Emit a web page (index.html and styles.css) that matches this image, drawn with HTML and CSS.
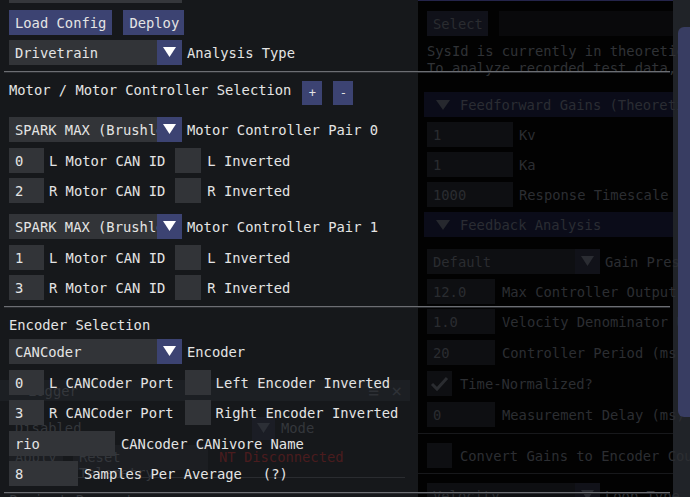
FILE: index.html
```html
<!DOCTYPE html>
<html>
<head>
<meta charset="utf-8">
<link rel="stylesheet" href="styles.css">
</head>
<body>
<div class="desk">
  <div class="under"></div>
  <main class="analyzer">
    <div class="a-row a-top">
      <div class="d-btn sel">Select</div>
      <div class="d-frame d-path"></div>
    </div>
    <div class="d-text">
      <div>SysId is currently in theoretical analysis mode.</div>
      <div>To analyze recorded test data, select a data file.</div>
    </div>
    <div class="d-header h1"><span class="d-tri"><svg width="14" height="12" viewBox="0 0 14 12"><polygon points="0,1 14,1 7,11" fill="#26282e"/></svg></span>Feedforward Gains (Theoretical)</div>
    <div class="a-row m5"><div class="d-frame w86">1</div><span class="d-lbl">Kv</span></div>
    <div class="a-row m5"><div class="d-frame w86">1</div><span class="d-lbl">Ka</span></div>
    <div class="a-row m5"><div class="d-frame w86">1000</div><span class="d-lbl">Response Timescale (ms)</span></div>
    <div class="d-header m5"><span class="d-tri"><svg width="14" height="12" viewBox="0 0 14 12"><polygon points="0,1 14,1 7,11" fill="#26282e"/></svg></span>Feedback Analysis</div>
    <div class="a-row m12"><div class="d-combo"><div class="d-val">Default</div><div class="d-arrow"><svg width="25" height="25" viewBox="0 0 25 25"><polygon points="6,7 19,7 12.5,17" fill="#2a2c32"/></svg></div></div><span class="d-lbl g5">Gain Preset</span></div>
    <div class="a-row m5"><div class="d-frame w68">12.0</div><span class="d-lbl g7">Max Controller Output (V)</span></div>
    <div class="a-row m5"><div class="d-frame w68">1.0</div><span class="d-lbl g7">Velocity Denominator Units</span></div>
    <div class="a-row m6"><div class="d-frame w68">20</div><span class="d-lbl g7">Controller Period (ms)</span></div>
    <div class="a-row m6"><div class="d-frame d-check"><svg width="25" height="25" viewBox="0 0 25 25"><polyline points="5,13 10,18 20,7" fill="none" stroke="#2a2c30" stroke-width="3"/></svg></div><span class="d-lbl g8">Time-Normalized?</span></div>
    <div class="a-row m6"><div class="d-frame w68">0</div><span class="d-lbl g7">Measurement Delay (ms)</span></div>
    <div class="d-sep s1"></div>
    <div class="a-row m9"><div class="d-frame d-check"></div><span class="d-lbl g8">Convert Gains to Encoder Counts</span></div>
    <div class="d-sep s2"></div>
    <div class="a-row m9"><div class="d-combo"><div class="d-val">Velocity</div><div class="d-arrow"><svg width="25" height="25" viewBox="0 0 25 25"><polygon points="6,7 19,7 12.5,17" fill="#2a2c32"/></svg></div></div><span class="d-lbl g5">Loop Type</span></div>
  </main>
  <div class="track"><div class="thumb"></div></div>
</div>

<section class="popup">
  <div class="ghost">
    <div class="g-title"><span class="g-tri"><svg width="12" height="11" viewBox="0 0 12 11"><polygon points="0,1 12,1 6,10" fill="#33363b"/></svg></span><span>Logger</span><span class="g-icons"><span class="g-menu">≡</span><span class="g-close">×</span></span></div>
    <div class="g-dis">Disabled</div>
    <div class="g-mode"><svg width="23" height="23" viewBox="0 0 23 23"><polygon points="5,6 18,6 11.5,16" fill="#2c2f36"/></svg></div>
    <div class="g-modelbl">Mode</div>
    <div class="g-apply">Apply</div>
    <div class="g-reset">Reset Telemetry</div>
    <div class="g-nt">NT Disconnected</div>
    <div class="g-line"></div>
    <div class="g-proj">Project Parameters</div>
  </div>

  <div class="content">
    <div class="topbar"></div>
    <div class="row m7">
      <div class="frame btn">Load Config</div>
      <div class="frame btn deploy">Deploy</div>
    </div>
    <div class="row m5">
      <div class="combo"><div class="val">Drivetrain</div><div class="arrow"><svg width="25" height="25" viewBox="0 0 25 25"><polygon points="6,7 19,7 12.5,17" fill="#ffffff"/></svg></div></div>
      <span class="lbl">Analysis Type</span>
    </div>
    <div class="sep"></div>
    <div class="row top m8">
      <span class="lbl title">Motor / Motor Controller Selection</span>
      <div class="frame btn small plus">+</div>
      <div class="frame btn small minus">-</div>
    </div>

    <div class="row m12">
      <div class="combo"><div class="val">SPARK MAX (Brushless)</div><div class="arrow"><svg width="25" height="25" viewBox="0 0 25 25"><polygon points="6,7 19,7 12.5,17" fill="#ffffff"/></svg></div></div>
      <span class="lbl">Motor Controller Pair 0</span>
    </div>
    <div class="row m6"><div class="frame id">0</div><span class="lbl">L Motor CAN ID</span><div class="frame check c1"></div><span class="lbl g6">L Inverted</span></div>
    <div class="row m5"><div class="frame id">2</div><span class="lbl">R Motor CAN ID</span><div class="frame check c1"></div><span class="lbl g6">R Inverted</span></div>

    <div class="row m11">
      <div class="combo"><div class="val">SPARK MAX (Brushless)</div><div class="arrow"><svg width="25" height="25" viewBox="0 0 25 25"><polygon points="6,7 19,7 12.5,17" fill="#ffffff"/></svg></div></div>
      <span class="lbl">Motor Controller Pair 1</span>
    </div>
    <div class="row m6"><div class="frame id">1</div><span class="lbl">L Motor CAN ID</span><div class="frame check c1"></div><span class="lbl g6">L Inverted</span></div>
    <div class="row m5"><div class="frame id">3</div><span class="lbl">R Motor CAN ID</span><div class="frame check c1"></div><span class="lbl g6">R Inverted</span></div>

    <div class="sep m6"></div>
    <div class="heading">Encoder Selection</div>
    <div class="row m5">
      <div class="combo"><div class="val">CANCoder</div><div class="arrow"><svg width="25" height="25" viewBox="0 0 25 25"><polygon points="6,7 19,7 12.5,17" fill="#ffffff"/></svg></div></div>
      <span class="lbl">Encoder</span>
    </div>
    <div class="row m6"><div class="frame id">0</div><span class="lbl">L CANCoder Port</span><div class="frame check c2"></div><span class="lbl">Left Encoder Inverted</span></div>
    <div class="row m5"><div class="frame id">3</div><span class="lbl">R CANCoder Port</span><div class="frame check c2"></div><span class="lbl">Right Encoder Inverted</span></div>
    <div class="row m6"><div class="frame bus">rio</div><span class="lbl g6">CANcoder CANivore Name</span></div>
    <div class="row m5"><div class="frame samples">8</div><span class="lbl g6">Samples Per Average</span><span class="lbl help">(?)</span></div>
    <div class="sep m6"></div>
  </div>
</section>
</body>
</html>
```
FILE: styles.css
```css
html, body {
  margin: 0;
  padding: 0;
  width: 690px;
  height: 497px;
  overflow: hidden;
  background: #000;
  font-family: "DejaVu Sans Mono", monospace;
  font-size: 13.8px;
}

/* ---------- background (dimmed) main window ---------- */
.desk {
  display: grid;
  grid-template-columns: 418px 255px 17px;
  width: 690px;
  height: 497px;
  overflow: hidden;
}
.under { background: #0a0b0c; }
.analyzer {
  position: relative;
  z-index: 1;
  background: #020202;
  border-top: 1px solid #24244a;
  padding-left: 9px;
  min-width: 0;
  color: #2f3135;
  white-space: nowrap;
}
.a-row { display: flex; align-items: center; }
.a-top { margin-top: 10px; }
.d-btn, .d-frame {
  height: 25px;
  box-sizing: border-box;
  display: flex;
  align-items: center;
  padding: 0 6px;
  background: #0e0f12;
  color: #2a2c30;
  flex: none;
}
.d-btn.sel { width: 61px; background: #101119; }
.d-path { flex: 1; margin-left: 11px; background: #09090b; }
.d-text { margin-top: 7px; line-height: 17px; color: #303236; }
.d-header {
  margin-left: -3px;
  height: 25px;
  background: #0b0c19;
  display: flex;
  align-items: center;
  color: #2a2c33;
}
.d-header.h1 { margin-top: 15px; }
.d-tri { width: 14px; margin: 0 10px 0 12px; display: flex; }
.w86 { width: 86px; }
.w68 { width: 68px; }
.d-lbl { margin-left: 6px; color: #2c2e32; }
.d-lbl.g5 { margin-left: 5px; }
.d-lbl.g7 { margin-left: 7px; }
.d-lbl.g8 { margin-left: 8px; }
.d-combo { width: 173px; height: 25px; display: flex; background: #0e0f12; flex: none; }
.d-val { flex: 1; padding: 0 6px; display: flex; align-items: center; color: #2a2c30; }
.d-arrow { width: 25px; height: 25px; background: #111219; }
.d-check { width: 25px; padding: 0; }
.d-sep { height: 1px; background: #17181b; margin-left: -9px; }
.d-sep.s1 { margin-top: 6px; }
.d-sep.s2 { margin-top: 5px; }

.m5 { margin-top: 5px; }
.m6 { margin-top: 6px; }
.m7 { margin-top: 7px; }
.m8 { margin-top: 8px; }
.m9 { margin-top: 9px; }
.m10 { margin-top: 10px; }
.m11 { margin-top: 11px; }
.m12 { margin-top: 12px; }

.track { background: #202328; padding-left: 5px; }
.thumb {
  position: relative;
  z-index: 2;
  margin-top: 27px;
  height: 390px;
  background: #383d62;
  border-radius: 6px 0 0 6px;
}

/* ---------- foreground popup ---------- */
.popup {
  position: absolute;
  z-index: 3;
  left: 0;
  top: 0;
  width: 670px;
  height: 497px;
  background: linear-gradient(to right, #16181b 0, #16181b 418px, transparent 418px);
  color: #e4e4e4;
}
.content {
  position: relative;
  padding-left: 9px;
  white-space: nowrap;
}
.topbar { width: 173px; height: 3px; background: #35373b; }
.row { display: flex; align-items: center; }
.row.top { align-items: flex-start; }
.frame {
  height: 25px;
  box-sizing: border-box;
  display: flex;
  align-items: center;
  padding: 0 6px;
  background: #323438;
  flex: none;
}
.btn { background: #3c4372; }
.deploy { margin-left: 11px; width: 61px; }
.small { width: 20px; height: 24px; padding: 0; justify-content: center; font-size: 12px; }
.plus { margin-left: 11px; }
.minus { margin-left: 11px; }
.combo { width: 173px; height: 25px; display: flex; background: #323438; flex: none; }
.val { flex: 1; padding: 0 6px; display: flex; align-items: center; overflow: hidden; }
.arrow { width: 25px; height: 25px; background: #3c4372; flex: none; }
.lbl { margin-left: 5px; }
.lbl.g6 { margin-left: 6px; }
.lbl.title { margin-left: 0; margin-top: 1px; line-height: 17px; }
.lbl.help { margin-left: 21px; }
.sep {
  margin-left: -5px;
  width: 666px;
  height: 1px;
  margin-top: 6px;
  border-top: 1px solid #6c6e73;
  background: #2a2c30;
}
.id { width: 35px; }
.check { width: 26px; padding: 0; }
.check.c1 { margin-left: 10px; }
.check.c2 { margin-left: 11px; }
.bus { width: 106px; }
.samples { width: 69px; }
.heading { margin-top: 9px; line-height: 17px; }

/* ghost of the logger window behind the popup */
.ghost {
  position: absolute;
  left: 0;
  top: 0;
  width: 418px;
  height: 497px;
  overflow: hidden;
  color: #34373c;
}
.g-title {
  position: absolute;
  left: 0;
  top: 380px;
  width: 410px;
  height: 21px;
  background: #1c1f23;
  display: flex;
  align-items: center;
}
.g-tri { margin-left: 10px; margin-right: 6px; display: flex; }
.g-icons { margin-left: auto; display: flex; gap: 12px; margin-right: 8px; font-size: 18px; color: #2e3136; }
.g-dis { position: absolute; left: 15px; top: 420px; }
.g-mode { position: absolute; left: 252px; top: 417px; width: 23px; height: 23px; background: #1b1d25; }
.g-modelbl { position: absolute; left: 281px; top: 420px; }
.g-apply { position: absolute; left: 9px; top: 445px; width: 54px; height: 25px; box-sizing: border-box; padding: 4px 6px; background: #1c1e22; }
.g-reset { position: absolute; left: 73px; top: 445px; width: 135px; height: 25px; box-sizing: border-box; padding: 4px 6px; background: #1c1e22; }
.g-nt { position: absolute; left: 219px; top: 449px; color: #4a1c1e; }
.g-line { position: absolute; left: 9px; top: 477px; width: 396px; height: 1px; background: #2a2c30; }
.g-proj { position: absolute; left: 9px; top: 492px; }
```
